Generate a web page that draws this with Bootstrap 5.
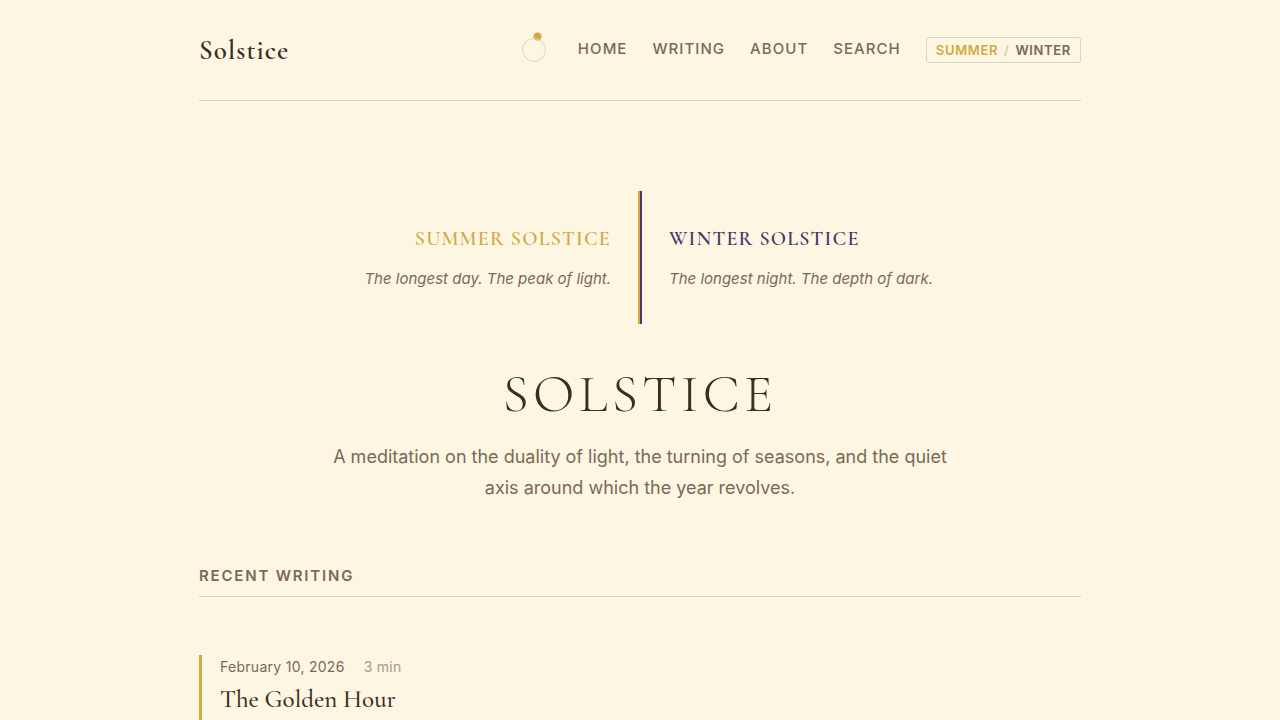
<!DOCTYPE html>
<html lang="en">
<head>
<meta charset="utf-8">
<meta name="viewport" content="width=device-width, initial-scale=1">
<title>Solstice</title>
<link href="https://cdn.jsdelivr.net/npm/bootstrap@5.3.0/dist/css/bootstrap.min.css" rel="stylesheet">
<style>
  :root {
    --cream: #fdf6e3;
    --ink: #3a2e1f;
    --soft: #7a6a54;
    --faint: #a89a84;
    --rule: #dfd3bd;
    --gold: #d4a843;
    --indigo: #483868;
    --serif: "Cormorant Garamond", "Liberation Serif", serif;
  }
  body { background: var(--cream); color: var(--ink); font-family: Inter, "Liberation Sans", sans-serif; }
  .page { max-width: 936px; padding: 0 27px; }
  .rule-bottom { border-bottom: 1px solid var(--rule); }
  .site-header { padding: 31px 0; }
  .site-name { padding-top: 2px; font: 600 27px/36px var(--serif); letter-spacing: .04em; color: var(--ink); }
  .site-nav { gap: 25px; }
  .site-nav a { padding-bottom: 2px; font-size: 15px; line-height: 24px; font-weight: 500; letter-spacing: .07em; color: var(--soft); }
  .orbit { width: 26px; height: 36px; margin-right: 6px; }
  .season { border: 1px solid var(--rule); border-radius: 3px; background: none; padding: 3px 9px; gap: 6px; font-size: 13px; line-height: 18px; font-weight: 600; letter-spacing: .05em; color: var(--soft); }
  .season .on { color: var(--gold); }
  .season .slash { color: #c8bca5; font-weight: 400; }
  .duality { margin-top: 90px; }
  .half { flex: 1 1 0; padding: 34px 27px 32px; }
  .half h2 { font: 600 20px/28px var(--serif); letter-spacing: .06em; margin: 0 0 13px; }
  .half p { font-size: 15px; line-height: 26px; font-style: italic; color: var(--soft); margin: 0; }
  .axis { width: 4px; background: linear-gradient(90deg, var(--gold) 50%, var(--indigo) 50%); }
  .summer { color: var(--gold); }
  .winter { color: var(--indigo); }
  .title { font: 300 54px/64px var(--serif); letter-spacing: .08em; margin: 38px 0 15px; }
  .intro { max-width: 630px; font-size: 18px; line-height: 31px; color: var(--soft); margin-bottom: 61px; }
  .section-title { font-size: 15px; line-height: 24px; font-weight: 600; letter-spacing: .12em; color: var(--soft); padding-bottom: 8px; margin-bottom: 58px; }
  .entry { border-left: 3px solid var(--gold); padding: 0 0 40px 18px; }
  .meta { font-size: 14px; line-height: 24px; gap: 19px; letter-spacing: .02em; color: var(--soft); }
  .meta .length { color: var(--faint); }
  .entry h3 { font: 500 25px/32px var(--serif); font-variant-ligatures: none; margin: 4px 0 0; }
</style>
</head>
<body>
<div class="page container-fluid mx-auto">
  <header class="site-header rule-bottom d-flex flex-wrap justify-content-between align-items-center">
    <a class="site-name text-decoration-none" href="#">Solstice</a>
    <nav class="site-nav d-flex flex-wrap align-items-center" aria-label="Main">
      <svg class="orbit" viewBox="0 0 26 36" aria-hidden="true">
        <circle cx="16.5" cy="4.5" r="4" fill="#d4a843"/>
        <circle cx="13" cy="18" r="11.5" fill="none" stroke="#dfd3bd"/>
      </svg>
      <a class="text-decoration-none" href="#">HOME</a>
      <a class="text-decoration-none" href="#">WRITING</a>
      <a class="text-decoration-none" href="#">ABOUT</a>
      <a class="text-decoration-none" href="#">SEARCH</a>
      <button class="season d-flex" type="button"><span class="on">SUMMER</span><span class="slash">/</span><span>WINTER</span></button>
    </nav>
  </header>
  <main>
    <section class="text-center">
      <div class="duality d-flex justify-content-center">
        <div class="half text-end">
          <h2 class="summer">SUMMER SOLSTICE</h2>
          <p>The longest day. The peak of light.</p>
        </div>
        <div class="axis"></div>
        <div class="half text-start">
          <h2 class="winter">WINTER SOLSTICE</h2>
          <p>The longest night. The depth of dark.</p>
        </div>
      </div>
      <h1 class="title">SOLSTICE</h1>
      <p class="intro mx-auto">A meditation on the duality of light, the turning of seasons, and the quiet axis around which the year revolves.</p>
    </section>
    <section>
      <h2 class="section-title rule-bottom">RECENT WRITING</h2>
      <article class="entry">
        <div class="meta d-flex"><time datetime="2026-02-10">February 10, 2026</time><span class="length">3 min</span></div>
        <h3><a class="text-reset text-decoration-none" href="#">The Golden Hour</a></h3>
      </article>
    </section>
  </main>
</div>
<script src="https://cdn.jsdelivr.net/npm/bootstrap@5.3.0/dist/js/bootstrap.bundle.min.js"></script>
</body>
</html>
